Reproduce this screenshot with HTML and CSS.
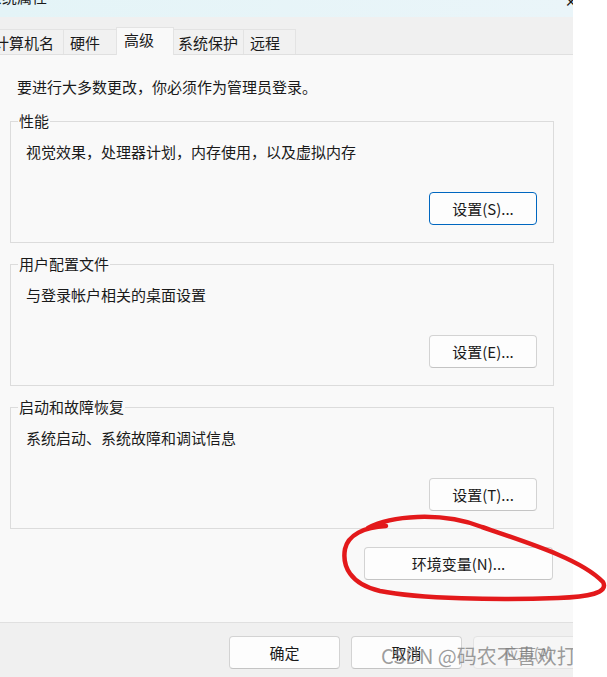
FILE: index.html
```html
<!DOCTYPE html>
<html lang="zh-CN">
<head>
  <meta charset="UTF-8">
  <meta name="viewport" content="width=device-width, initial-scale=1.0">
  <title>系统属性</title>
  <link rel="stylesheet" href="styles.css">
</head>
<body>

<div class="window">
  <div class="titlebar">
    <span class="title">系统属性</span>
    <span class="close">✕</span>
  </div>

  <div class="tabs">
    <div class="tab first">计算机名</div>
    <div class="tab hw">硬件</div>
    <div class="tab active">高级</div>
    <div class="tab sys">系统保护</div>
    <div class="tab remote">远程</div>
  </div>

  <div class="content">
    <p class="intro">要进行大多数更改，你必须作为管理员登录。</p>

    <fieldset class="group">
      <legend>性能</legend>
      <p class="group-text">视觉效果，处理器计划，内存使用，以及虚拟内存</p>
      <div class="group-actions">
        <button class="btn focused">设置(S)...</button>
      </div>
    </fieldset>

    <fieldset class="group">
      <legend>用户配置文件</legend>
      <p class="group-text">与登录帐户相关的桌面设置</p>
      <div class="group-actions">
        <button class="btn">设置(E)...</button>
      </div>
    </fieldset>

    <fieldset class="group">
      <legend>启动和故障恢复</legend>
      <p class="group-text">系统启动、系统故障和调试信息</p>
      <div class="group-actions">
        <button class="btn">设置(T)...</button>
      </div>
    </fieldset>

    <div class="env-row">
      <button class="btn env">环境变量(N)...</button>
    </div>
  </div>

  <div class="footer">
    <button class="btn footer-btn">确定</button>
    <button class="btn footer-btn">取消</button>
    <button class="btn footer-btn disabled">应用(A)</button>
  </div>

  <div class="watermark">CSDN @码农不喜欢打字</div>
</div>

<!-- hand-drawn red circle round the env button -->
<svg class="scribble" width="607" height="677" viewBox="0 0 607 677">
  <path d="M368,528 C390,516 440,511 482,527 C532,544 582,560 603,582 C609,593 588,597 558,598 C498,600 420,599 380,591 C350,584 342,566 345,549 C348,535 364,527 386,526"
        fill="none" stroke="#e3191b" stroke-width="4.5" stroke-linecap="round" stroke-linejoin="round"/>
</svg>

</body>
</html>
```

FILE: styles.css
```css
body {
  margin: 0;
  background: #fff;
  font-family: "Noto Sans CJK SC", "Noto Sans", sans-serif;
  font-size: 15px;
  color: #1a1a1a;
}
.window {
  width: 573px;
  height: 677px;
  overflow: hidden;
  position: relative;
  background: #f9f9f9;
}
.titlebar {
  height: 17px;
  background: linear-gradient(90deg, #e4f4f7, #eaf5f9);
  overflow: hidden;
  position: relative;
}
.title {
  display: block;
  margin: -13px 0 0 -13px;
  line-height: 20px;
}
.close {
  position: absolute;
  right: -4px;
  top: -9px;
  font-size: 14px;
}
.tabs {
  height: 37px;
  background: #f0f0f0;
  border-bottom: 1px solid #e0e0e0;
  display: flex;
  align-items: flex-end;
}
.tab {
  height: 25px;
  line-height: 25px;
  padding-left: 6px;
  border: 1px solid #e3e3e3;
  border-bottom: none;
  margin-right: -1px;
  background: #f1f1f1;
  box-sizing: border-box;
  flex: none;
}
.tab.first {
  margin-left: -8px;
  padding-left: 1px;
  width: 72px;
}
.tab.hw {
  width: 54px;
}
.tab.active {
  height: 28px;
  line-height: 24px;
  padding-left: 7px;
  width: 58px;
  margin-bottom: -1px;
  background: #f9f9f9;
  position: relative;
}
.tab.sys {
  width: 71px;
  padding-left: 4px;
}
.tab.remote {
  width: 53px;
}
.content {
  height: 568px;
  box-sizing: border-box;
  border-bottom: 1px solid #e0e0e0;
  padding-top: 22px;
}
.intro {
  margin: 0 0 14px 17px;
  line-height: 20px;
}
.group {
  margin: 0 19px 11px 10px;
  padding: 0 16px 17px 0;
  border: 1px solid #dcdcdc;
  min-width: 0;
}
.group legend {
  margin-left: 7px;
  padding: 0 1px;
  line-height: 20px;
}
.group-text {
  margin: 11px 0 0 15px;
  line-height: 20px;
}
.group-actions {
  display: flex;
  justify-content: flex-end;
  margin-top: 30px;
}
.btn {
  font-family: inherit;
  font-size: 15px;
  color: #1a1a1a;
  background: #fdfdfd;
  border: 1px solid #d3d3d3;
  border-bottom-color: #c4c4c4;
  border-radius: 4px;
  height: 33px;
  width: 108px;
  padding: 0;
}
.btn.focused {
  border: 1px solid #0067c0;
}
.env-row {
  display: flex;
  justify-content: flex-end;
  margin: 18px 20px 0 0;
}
.btn.env {
  width: 189px;
}
.footer {
  display: flex;
  gap: 11px;
  padding: 13px 0 0 229px;
  background: #f0f0f0;
  height: 54px;
  box-sizing: border-box;
}
.footer-btn {
  width: 111px;
  flex: none;
}
.btn.disabled {
  color: #a2a2a2;
  background: #f6f6f6;
  border-color: #e3e3e3;
}
.watermark {
  position: absolute;
  left: 381px;
  top: 642px;
  font-size: 20px;
  line-height: 28px;
  white-space: nowrap;
  color: rgba(120, 120, 120, 0.72);
}
.scribble {
  position: absolute;
  left: 0;
  top: 0;
  pointer-events: none;
}
```
